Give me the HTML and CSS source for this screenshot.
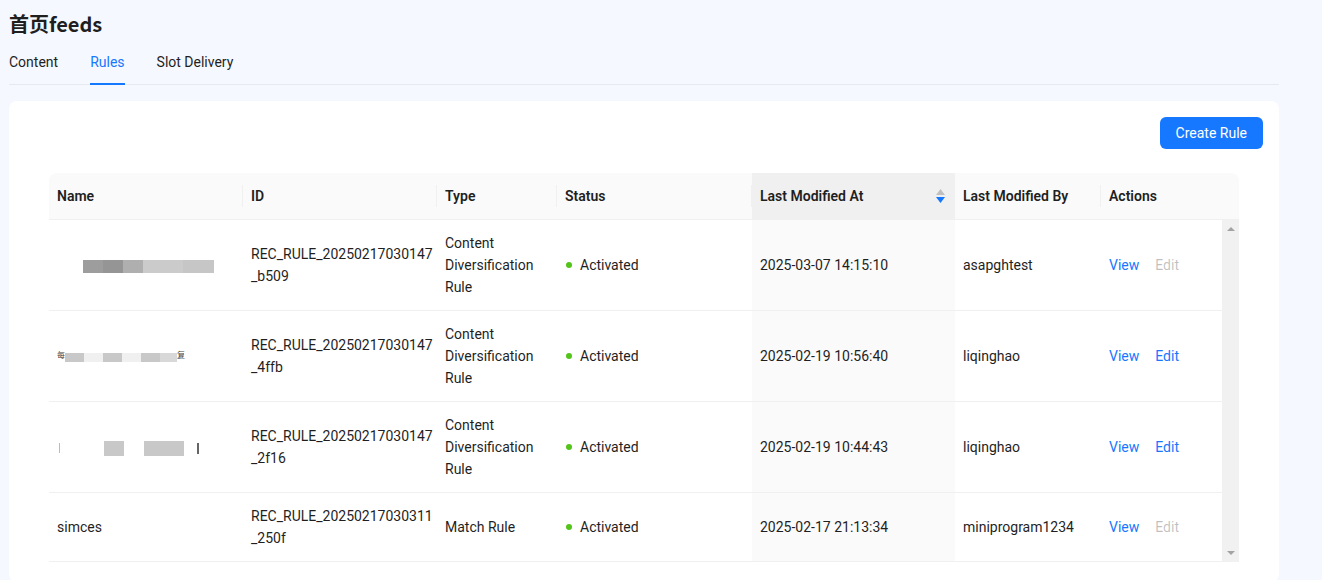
FILE: index.html
```html
<!DOCTYPE html>
<html lang="zh-CN">
<head>
  <meta charset="UTF-8" />
  <meta name="viewport" content="width=device-width, initial-scale=1.0"/>
  <title>首页feeds</title>
  <link rel="stylesheet" href="styles.css">
</head>
<body>
  <div class="page">
    <h1 class="page-title">首页feeds</h1>

    <div class="tabs">
      <div class="tab">Content</div>
      <div class="tab active">Rules</div>
      <div class="tab">Slot Delivery</div>
    </div>

    <div class="card">
      <div class="toolbar">
        <button class="btn-primary">Create Rule</button>
      </div>

      <div class="table-wrap">
        <table class="rules-table head">
          <colgroup>
            <col class="col-name"><col class="col-id"><col class="col-type"><col class="col-status">
            <col class="col-time"><col class="col-by"><col class="col-actions"><col class="col-scroll">
          </colgroup>
          <thead>
            <tr>
              <th class="sep">Name</th>
              <th class="sep">ID</th>
              <th class="sep">Type</th>
              <th class="sep">Status</th>
              <th class="sorted">
                <div class="sort-head">
                  <span>Last Modified At</span>
                  <span class="sorter">
                    <svg width="9" height="6" viewBox="0 0 9 6"><path d="M4.5 0 L9 6 L0 6 Z" fill="#bfbfbf"/></svg>
                    <svg width="9" height="6" viewBox="0 0 9 6"><path d="M0 0 L9 0 L4.5 6 Z" fill="#1677ff"/></svg>
                  </span>
                </div>
              </th>
              <th class="sep">Last Modified By</th>
              <th>Actions</th>
              <th></th>
            </tr>
          </thead>
        </table>

        <div class="body-scroll">
          <table class="rules-table body">
            <colgroup>
              <col class="col-name"><col class="col-id"><col class="col-type"><col class="col-status">
              <col class="col-time"><col class="col-by"><col class="col-actions">
            </colgroup>
            <tbody>
              <tr>
                <td><div class="mosaic mosaic-a"></div></td>
                <td>REC_RULE_20250217030147<wbr>_b509</td>
                <td>Content Diversification Rule</td>
                <td><span class="dot"></span>Activated</td>
                <td class="sorted">2025-03-07 14:15:10</td>
                <td>asapghtest</td>
                <td><a class="link">View</a><a class="link disabled">Edit</a></td>
              </tr>
              <tr>
                <td class="masked"><span class="frag">每</span><span class="mosaic mosaic-b"></span><span class="frag">复</span></td>
                <td>REC_RULE_20250217030147<wbr>_4ffb</td>
                <td>Content Diversification Rule</td>
                <td><span class="dot"></span>Activated</td>
                <td class="sorted">2025-02-19 10:56:40</td>
                <td>liqinghao</td>
                <td><a class="link">View</a><a class="link">Edit</a></td>
              </tr>
              <tr>
                <td class="masked"><span class="mark"></span><span class="mosaic mosaic-c"></span><span class="mark bang"></span></td>
                <td>REC_RULE_20250217030147<wbr>_2f16</td>
                <td>Content Diversification Rule</td>
                <td><span class="dot"></span>Activated</td>
                <td class="sorted">2025-02-19 10:44:43</td>
                <td>liqinghao</td>
                <td><a class="link">View</a><a class="link">Edit</a></td>
              </tr>
              <tr>
                <td>simces</td>
                <td>REC_RULE_20250217030311<wbr>_250f</td>
                <td>Match Rule</td>
                <td><span class="dot"></span>Activated</td>
                <td class="sorted">2025-02-17 21:13:34</td>
                <td>miniprogram1234</td>
                <td><a class="link">View</a><a class="link disabled">Edit</a></td>
              </tr>
            </tbody>
          </table>

          <div class="scrollbar">
            <span class="arrow up"></span>
            <span class="arrow down"></span>
          </div>
        </div>
      </div>
    </div>
  </div>
</body>
</html>
```

FILE: styles.css
```css
body {
  margin: 0;
  background: #f5f8fe;
  font-family: Roboto, "Noto Sans CJK SC", sans-serif;
  font-size: 14px;
  color: #1f1f1f;
}

.page {
  width: 1270px;
  padding: 10px 0 0 9px;
}

.page-title {
  margin: 0;
  font-size: 20px;
  line-height: 28px;
  font-weight: 700;
  font-family: "Noto Sans CJK SC", sans-serif;
}

.tabs {
  display: flex;
  gap: 32px;
  margin-top: 1px;
  border-bottom: 1px solid #e6e9ef;
}

.tab {
  position: relative;
  padding: 12px 0 11px;
  line-height: 22px;
  cursor: pointer;
}

.tab.active {
  color: #1677ff;
}

.tab.active::after {
  content: "";
  position: absolute;
  left: 0;
  right: 0;
  bottom: -1px;
  height: 2px;
  background: #1677ff;
}

.card {
  margin-top: 16px;
  background: #fff;
  border-radius: 8px;
  padding: 16px 16px 20px;
}

.toolbar {
  display: flex;
  justify-content: flex-end;
}

.btn-primary {
  height: 32px;
  padding: 0 16px;
  border: none;
  border-radius: 6px;
  background: #1677ff;
  color: #fff;
  font-family: inherit;
  font-size: 14px;
  cursor: pointer;
}

.table-wrap {
  margin: 24px 24px 0;
}

.rules-table {
  width: 100%;
  border-collapse: separate;
  border-spacing: 0;
  table-layout: fixed;
}

.col-name { width: 194px; }
.col-id { width: 194px; }
.col-type { width: 120px; }
.col-status { width: 195px; }
.col-time { width: 203px; }
.col-by { width: 146px; }
.col-actions { width: 121px; }
.col-scroll { width: 17px; }

.rules-table th,
.rules-table td {
  padding: 12px 8px;
  line-height: 22px;
  text-align: left;
  border-bottom: 1px solid #f0f0f0;
}

.rules-table th {
  position: relative;
  background: #fafafa;
  font-weight: 600;
}

.rules-table th:first-child { border-top-left-radius: 8px; }
.rules-table th:last-child { border-top-right-radius: 8px; padding: 0; }

.rules-table th.sep::before {
  content: "";
  position: absolute;
  right: 0;
  top: 50%;
  width: 1px;
  height: 22px;
  margin-top: -11px;
  background: #f0f0f0;
}

.rules-table th.sorted {
  background: #f0f0f0;
}

.rules-table td.sorted {
  background: #fafafa;
}

.sort-head {
  display: flex;
  align-items: center;
  justify-content: space-between;
}

.sorter {
  display: flex;
  flex-direction: column;
  gap: 2px;
  margin-right: 2px;
}

.sorter svg {
  display: block;
}

.rules-table td {
  vertical-align: middle;
  overflow-wrap: normal;
}

.rules-table td.masked {
  white-space: nowrap;
}

.body-scroll {
  display: flex;
}

.body-scroll .rules-table {
  flex: 1;
}

.scrollbar {
  width: 17px;
  flex: none;
  background: #f1f1f1;
  display: flex;
  flex-direction: column;
  justify-content: space-between;
  align-items: center;
  padding: 7px 0;
}

.arrow {
  width: 0;
  height: 0;
  border-left: 4px solid transparent;
  border-right: 4px solid transparent;
}

.arrow.up { border-bottom: 4px solid #a3a3a3; }
.arrow.down { border-top: 4px solid #a3a3a3; }

.dot {
  display: inline-block;
  width: 6px;
  height: 6px;
  border-radius: 50%;
  background: #52c41a;
  margin: 0 8px 2px 1px;
  vertical-align: middle;
}

.link {
  color: #1677ff;
  margin-right: 16px;
  cursor: pointer;
}

.link.disabled {
  color: rgba(0, 0, 0, 0.25);
  cursor: not-allowed;
}

.mosaic {
  display: inline-block;
  vertical-align: middle;
}

.mosaic-a {
  display: block;
  width: 131px;
  height: 13px;
  margin: 3px 0 0 26px;
  background: linear-gradient(to right,
    #9d9d9d 0 20px, #959595 20px 40px, #afafaf 40px 60px,
    #cbcbcb 60px 100px, #c6c6c6 100px);
}

.mosaic-b {
  width: 112px;
  height: 9px;
  margin-top: 2px;
  background: linear-gradient(to right,
    #c8c8c8 0 19px, #f0f0f0 19px 38px, #c8c8c8 38px 57px,
    #f0f0f0 57px 76px, #c8c8c8 76px 95px, #d8d8d8 95px);
}

.frag {
  color: #444;
  font-size: 8px;
  vertical-align: middle;
}

.mosaic-c {
  width: 80px;
  height: 15px;
  margin: 0 13px 0 44px;
  background: linear-gradient(to right,
    #c8c8c8 0 20px, transparent 20px 40px, #c8c8c8 40px);
}

.mark {
  display: inline-block;
  width: 1px;
  height: 10px;
  margin-left: 2px;
  background: #bbb;
  vertical-align: middle;
}

.mark.bang {
  width: 2px;
  height: 11px;
  margin-left: 0;
  background: #666;
}
```
